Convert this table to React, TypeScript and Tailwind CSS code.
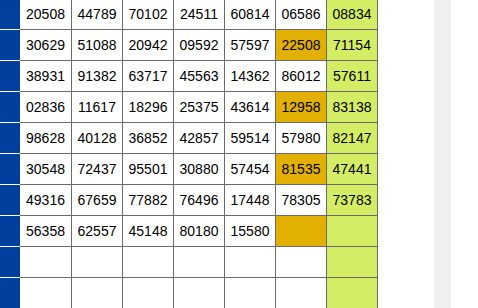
import React from 'react';

const rows: string[][] = [
    ['20508', '44789', '70102', '24511', '60814', '06586', '08834'],
    ['30629', '51088', '20942', '09592', '57597', '22508', '71154'],
    ['38931', '91382', '63717', '45563', '14362', '86012', '57611'],
    ['02836', '11617', '18296', '25375', '43614', '12958', '83138'],
    ['98628', '40128', '36852', '42857', '59514', '57980', '82147'],
    ['30548', '72437', '95501', '30880', '57454', '81535', '47441'],
    ['49316', '67659', '77882', '76496', '17448', '78305', '73783'],
    ['56358', '62557', '45148', '80180', '15580', '', ''],
    ['', '', '', '', '', '', ''],
    ['', '', '', '', '', '', ''],
];

// cells in the 6th column that are highlighted
const orangeRows = [1, 3, 5, 7];

export default function App() {
    return (
        <div className="h-[308px] w-[478px] overflow-hidden bg-white flex" style={{ fontFamily: '"Liberation Sans", Arial, sans-serif' }}>
            <div className="flex flex-col">
                {rows.map((row, r) => (
                    <div key={r} className={'flex h-[31px] ' + (r > 0 ? 'border-t border-[#6b6b6b]' : '')}>
                        <div className={'w-[20px] bg-[#003f9e] ' + (r > 0 ? '-mt-px border-t border-white h-[31px]' : '')} />
                        {row.map((v, c) => {
                            let bg = 'bg-white';
                            if (c === 6) bg = 'bg-[#d3ed65]';
                            if (c === 5 && orangeRows.includes(r)) bg = 'bg-[#e1b000]';
                            return (
                                <div
                                    key={c}
                                    className={
                                        'flex items-center justify-center text-[14px] text-black ' + bg +
                                        (c === 0 ? ' w-[51px]' : ' w-[51px] border-l border-[#6b6b6b]') +
                                        (c === 6 ? ' w-[52px] border-r' : '')
                                    }
                                >
                                    {v}
                                </div>
                            );
                        })}
                    </div>
                ))}
            </div>
            <div className="w-[56px]" />
            <div className="w-[17px] h-full bg-[#f0f0f0]" />
        </div>
    );
}
